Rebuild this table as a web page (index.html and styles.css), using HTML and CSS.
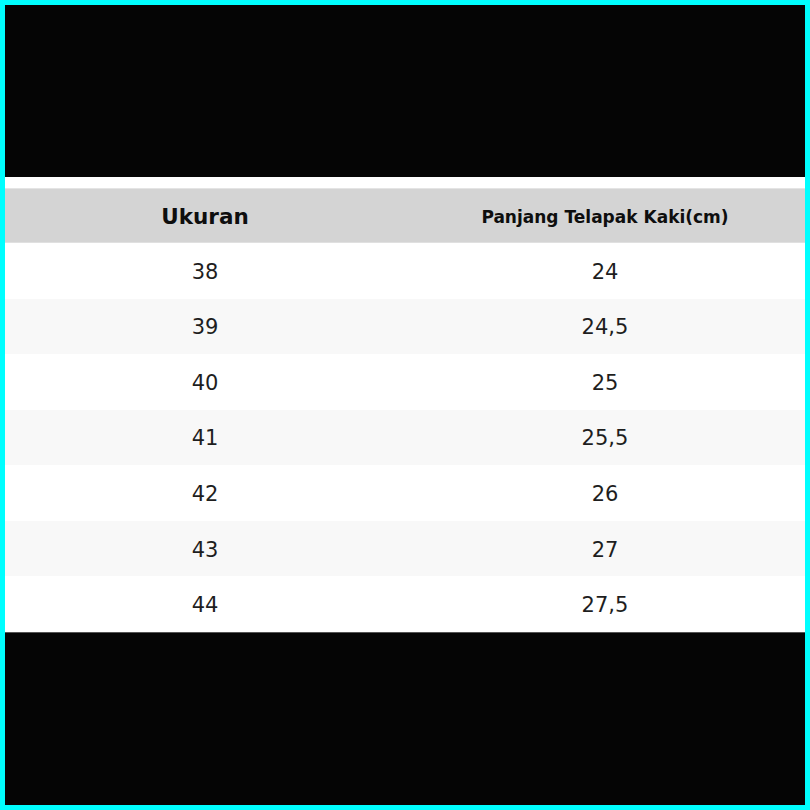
FILE: index.html
```html
<!DOCTYPE html>
<html>
<head>
<meta charset="utf-8">
<link rel="stylesheet" href="styles.css">
</head>
<body>
<div class="frame">
  <div class="top"></div>
  <div class="sheet">
    <div class="row head">
      <div class="cell h1">Ukuran</div>
      <div class="cell h2">Panjang Telapak Kaki(cm)</div>
    </div>
    <div class="row"><div class="cell">38</div><div class="cell">24</div></div>
    <div class="row alt"><div class="cell">39</div><div class="cell">24,5</div></div>
    <div class="row"><div class="cell">40</div><div class="cell">25</div></div>
    <div class="row alt"><div class="cell">41</div><div class="cell">25,5</div></div>
    <div class="row"><div class="cell">42</div><div class="cell">26</div></div>
    <div class="row alt"><div class="cell">43</div><div class="cell">27</div></div>
    <div class="row"><div class="cell">44</div><div class="cell">27,5</div></div>
  </div>
  <div class="bottom"></div>
</div>
</body>
</html>
```
FILE: styles.css
```css
html, body {
  margin: 0;
  padding: 0;
}
body {
  width: 810px;
  height: 810px;
  background: #00ffff;
  font-family: "DejaVu Sans", sans-serif;
}
.frame {
  box-sizing: border-box;
  width: 810px;
  height: 810px;
  border: 5px solid #00ffff;
  background: #050505;
  display: flex;
  flex-direction: column;
}
.top {
  height: 172px;
  flex: none;
}
.sheet {
  background: #ffffff;
  padding-top: 11px;
  border-bottom: 1px solid #555;
  flex: none;
}
.row {
  display: grid;
  grid-template-columns: 400px 400px;
  height: 55.57px;
  align-items: center;
}
.row.alt {
  background: #f8f8f8;
}
.row.head {
  height: 55px;
  background: #d4d4d4;
  box-shadow: inset 0 1px 0 #e4e4e4, inset 0 -1px 0 #e0e0e0;
}
.cell {
  text-align: center;
  font-size: 21px;
  color: #1e1e1e;
  padding-top: 2px;
}
.h1 {
  font-weight: bold;
  font-size: 21.5px;
  color: #0e0e0e;
}
.h2 {
  font-weight: bold;
  font-size: 17px;
  color: #0e0e0e;
}
.bottom {
  flex: 1;
}
```
